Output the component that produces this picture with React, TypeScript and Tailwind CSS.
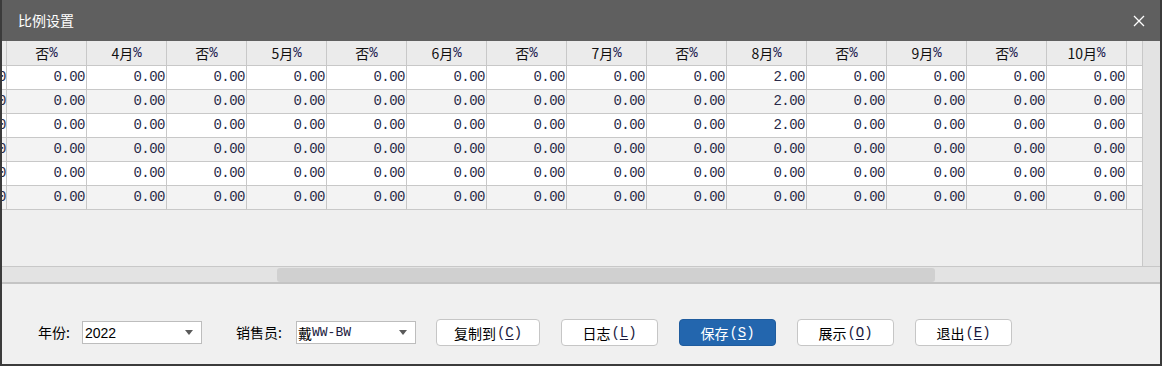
import React from "react";

const CJK = "font-['Noto_Sans_CJK_SC','Noto_Sans',sans-serif]";
const MONO = "font-['Liberation_Mono',monospace]";

const headers = ["否", "4月", "否", "5月", "否", "6月", "否", "7月", "否", "8月", "否", "9月", "否", "10月"];

// 8月% column (index 9) holds 2.00 for the first three rows
const rows = Array.from({ length: 6 }, (_, r) =>
  headers.map((_, c) => (c === 9 && r < 3 ? "2.00" : "0.00"))
);

function Select({ children }: { children: React.ReactNode }) {
  return (
    <div className="w-[120px] h-[23px] bg-white border border-[#bdbdbd] flex items-center pl-[1px] pr-[8px]">
      <div className="flex-1 flex items-center text-[14px] text-black leading-none">{children}</div>
      <div className="w-0 h-0 border-l-[4.5px] border-r-[4.5px] border-t-[5px] border-l-transparent border-r-transparent border-t-[#5a5a5a]" />
    </div>
  );
}

function Button({ label, hot, primary }: { label: string; hot: string; primary?: boolean }) {
  return (
    <button
      className={
        "h-[27px] rounded-[4px] border flex items-center justify-center text-[14px] leading-none " +
        CJK +
        (primary ? " bg-[#2366ae] border-[#1f5c9e] text-white" : " bg-white border-[#c6c6c6] text-black")
      }
    >
      {label}
      <span className={"ml-[1px] " + MONO + (primary ? " text-white" : " text-[#1a1a40]")}>
        (<span className="underline underline-offset-2">{hot}</span>)
      </span>
    </button>
  );
}

export default function App() {
  return (
    <div className="w-[1162px] h-[366px] flex flex-col bg-[#5f5f5f] border-x-2 border-b-2 border-[#3b3b3b] overflow-hidden">
      {/* title bar */}
      <div className="h-[41px] shrink-0 flex items-center justify-between pl-[16px] pr-[15px]">
        <span className={"text-white text-[14px] " + CJK}>比例设置</span>
        <svg width="12" height="12" viewBox="0 0 12 12">
          <path d="M1 1 L11 11 M11 1 L1 11" stroke="#ffffff" strokeWidth="1.3" />
        </svg>
      </div>

      {/* grid + vertical scrollbar */}
      <div className="h-[225px] shrink-0 flex bg-[#efefef]">
        <div className="w-[1140px] flex flex-col overflow-hidden">
          <div className="h-[25px] flex bg-[#ebebeb] border-b border-[#c8c8c8]">
            <div className="w-[5px] border-r border-[#c8c8c8]" />
            {headers.map((h, i) => (
              <div
                key={i}
                className={"w-[80px] shrink-0 border-r border-[#c8c8c8] flex items-center justify-center text-[14px] text-[#111] " + CJK}
              >
                {h}
                <span className={"text-[14px] text-[#1a1a50] " + MONO}>%</span>
              </div>
            ))}
            <div className="flex-1" />
          </div>
          {rows.map((row, r) => (
            <div
              key={r}
              className={"h-[24px] flex border-b border-[#c8c8c8] " + (r % 2 === 0 ? "bg-white" : "bg-[#f3f3f3]")}
            >
              {/* partly scrolled-out column */}
              <div className="w-[5px] shrink-0 border-r border-[#c8c8c8] overflow-hidden flex justify-end items-center">
                <span className={"text-[14px] tracking-[-0.5px] text-[#2a2a48] whitespace-nowrap " + MONO}>0.00</span>
              </div>
              {row.map((v, c) => (
                <div
                  key={c}
                  className={"w-[80px] shrink-0 border-r border-[#c8c8c8] flex items-center justify-end pr-[1px] text-[14px] tracking-[-0.5px] text-[#2a2a48] " + MONO}
                >
                  {v}
                </div>
              ))}
              <div className="flex-1" />
            </div>
          ))}
        </div>
        <div className="flex-1 bg-[#e3e3e3] border-l border-[#c8c8c8]" />
      </div>

      {/* horizontal scrollbar */}
      <div className="h-[18px] shrink-0 bg-[#e3e3e3] border-t border-[#c8c8c8] border-b-2 border-b-[#c4c4c4] flex items-center">
        <div className="ml-[275px] w-[658px] h-[14px] rounded-[3px] bg-[#d0d0d0]" />
      </div>

      {/* bottom panel */}
      <div className="flex-1 bg-[#f0f0f0] flex items-start pt-[35px] pl-[36px]">
        <div className="flex items-center">
          <span className={"w-[44px] text-[14px] text-black " + CJK}>年份:</span>
          <Select>
            <span className="font-['Liberation_Sans',sans-serif] text-[14px] ml-[1px]">2022</span>
          </Select>
          <span className={"ml-[34px] w-[60px] text-[14px] text-black " + CJK}>销售员:</span>
          <Select>
            <span className={CJK}>戴</span>
            <span className={"text-[13px] text-[#1a1a40] " + MONO}>WW-BW</span>
          </Select>
          <div className="ml-[20px] flex gap-[21px]">
            <div className="w-[104px] flex flex-col"><Button label="复制到" hot="C" /></div>
            <div className="w-[97px] flex flex-col"><Button label="日志" hot="L" /></div>
            <div className="w-[97px] flex flex-col"><Button label="保存" hot="S" primary /></div>
            <div className="w-[97px] flex flex-col"><Button label="展示" hot="O" /></div>
            <div className="w-[97px] flex flex-col"><Button label="退出" hot="E" /></div>
          </div>
        </div>
      </div>
    </div>
  );
}
